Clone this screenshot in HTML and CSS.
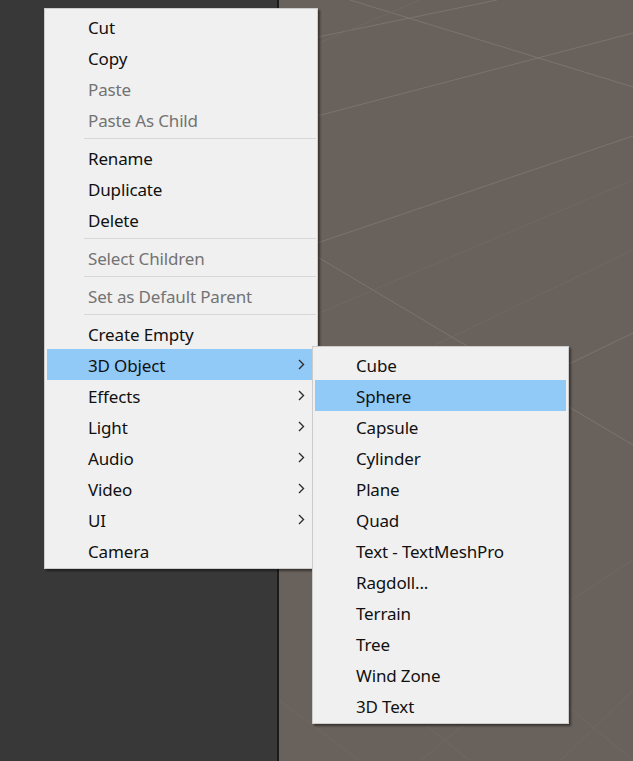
FILE: index.html
```html
<!DOCTYPE html>
<html>
<head>
  <title>Hierarchy Context Menu</title>
  <link rel="stylesheet" href="styles.css">
</head>
<body>

  <div class="editor">
    <div class="hierarchy"></div>
    <div class="scene">
      <svg class="grid" viewBox="279 0 354 761" preserveAspectRatio="none">
        <g class="major">
          <line x1="279" y1="45" x2="497" y2="0" />
          <line x1="350" y1="0" x2="633" y2="87" />
          <line x1="279" y1="126" x2="633" y2="33" />
          <line x1="279" y1="256" x2="633" y2="136" />
          <line x1="279" y1="234" x2="633" y2="445" />
          <line x1="633" y1="333" x2="540" y2="378" />
        </g>
        <g class="minor">
          <line x1="420" y1="0" x2="279" y2="60" />
          <line x1="633" y1="180" x2="279" y2="330" />
          <line x1="633" y1="250" x2="279" y2="420" />
          <line x1="633" y1="560" x2="540" y2="620" />
          <line x1="560" y1="700" x2="633" y2="760" />
          <line x1="633" y1="690" x2="560" y2="761" />
          <line x1="279" y1="700" x2="360" y2="761" />
          <line x1="420" y1="720" x2="470" y2="761" />
          <line x1="470" y1="720" x2="420" y2="761" />
        </g>
      </svg>
    </div>
  </div>

  <!-- Hierarchy context menu -->
  <ul class="menu main-menu">
    <li class="item">Cut</li>
    <li class="item">Copy</li>
    <li class="item disabled">Paste</li>
    <li class="item disabled">Paste As Child</li>
    <li class="sep"></li>
    <li class="item">Rename</li>
    <li class="item">Duplicate</li>
    <li class="item">Delete</li>
    <li class="sep"></li>
    <li class="item disabled">Select Children</li>
    <li class="sep"></li>
    <li class="item disabled">Set as Default Parent</li>
    <li class="sep"></li>
    <li class="item">Create Empty</li>
    <li class="item active">3D Object <svg class="arrow" viewBox="0 0 7 11"><polyline points="1,1 5.5,5.5 1,10" /></svg></li>
    <li class="item">Effects <svg class="arrow" viewBox="0 0 7 11"><polyline points="1,1 5.5,5.5 1,10" /></svg></li>
    <li class="item">Light <svg class="arrow" viewBox="0 0 7 11"><polyline points="1,1 5.5,5.5 1,10" /></svg></li>
    <li class="item">Audio <svg class="arrow" viewBox="0 0 7 11"><polyline points="1,1 5.5,5.5 1,10" /></svg></li>
    <li class="item">Video <svg class="arrow" viewBox="0 0 7 11"><polyline points="1,1 5.5,5.5 1,10" /></svg></li>
    <li class="item">UI <svg class="arrow" viewBox="0 0 7 11"><polyline points="1,1 5.5,5.5 1,10" /></svg></li>
    <li class="item">Camera</li>
  </ul>

  <!-- 3D Object submenu -->
  <ul class="menu sub-menu">
    <li class="item">Cube</li>
    <li class="item active">Sphere</li>
    <li class="item">Capsule</li>
    <li class="item">Cylinder</li>
    <li class="item">Plane</li>
    <li class="item">Quad</li>
    <li class="item">Text - TextMeshPro</li>
    <li class="item">Ragdoll...</li>
    <li class="item">Terrain</li>
    <li class="item">Tree</li>
    <li class="item">Wind Zone</li>
    <li class="item">3D Text</li>
  </ul>

</body>
</html>
```

FILE: styles.css
```css
body {
  margin: 0;
  font-family: "Noto Sans", sans-serif;
  font-size: 17px;
  letter-spacing: -0.15px;
  position: relative;
  width: 633px;
  height: 761px;
  overflow: hidden;
}

.editor {
  display: flex;
  height: 761px;
}

.hierarchy {
  width: 277px;
  background: #383838;
  border-right: 2px solid #1b1b1b;
}

.scene {
  flex: 1;
  position: relative;
  background: #69615b;
}

.grid {
  position: absolute;
  top: 0; left: 0;
  width: 100%; height: 100%;
}

.grid line {
  stroke-width: 1;
}

.grid .major line {
  stroke: #7c746e;
}

.grid .minor line {
  stroke: #706863;
}

/* Menus */
.menu {
  position: absolute;
  margin: 0;
  padding: 2px;
  list-style: none;
  background: #f0f0f0;
  border: 1px solid #cccccc;
  box-sizing: border-box;
  box-shadow: 2px 2px 2px rgba(0, 0, 0, 0.45);
}

.main-menu {
  left: 44px;
  top: 8px;
  width: 274px;
}

.sub-menu {
  left: 312px;
  top: 346px;
  width: 257px;
}

.item {
  box-sizing: border-box;
  height: 31px;
  line-height: 29px;
  padding-top: 2px;
  padding-left: 41px;
  padding-right: 10px;
  color: #111;
  display: flex;
  justify-content: space-between;
  align-items: center;
  white-space: nowrap;
}

.item.disabled {
  color: #737373;
}

.item.active {
  background: #91c9f7;
}

.arrow {
  width: 7px;
  height: 11px;
  margin-top: -2px;
}

.arrow polyline {
  fill: none;
  stroke: #2e2e2e;
  stroke-width: 1.4;
}

.sep {
  height: 7px;
  position: relative;
}

.sep::after {
  content: "";
  position: absolute;
  top: 3px;
  left: 37px;
  right: -1px;
  border-top: 1px solid #d7d7d7;
}
```
